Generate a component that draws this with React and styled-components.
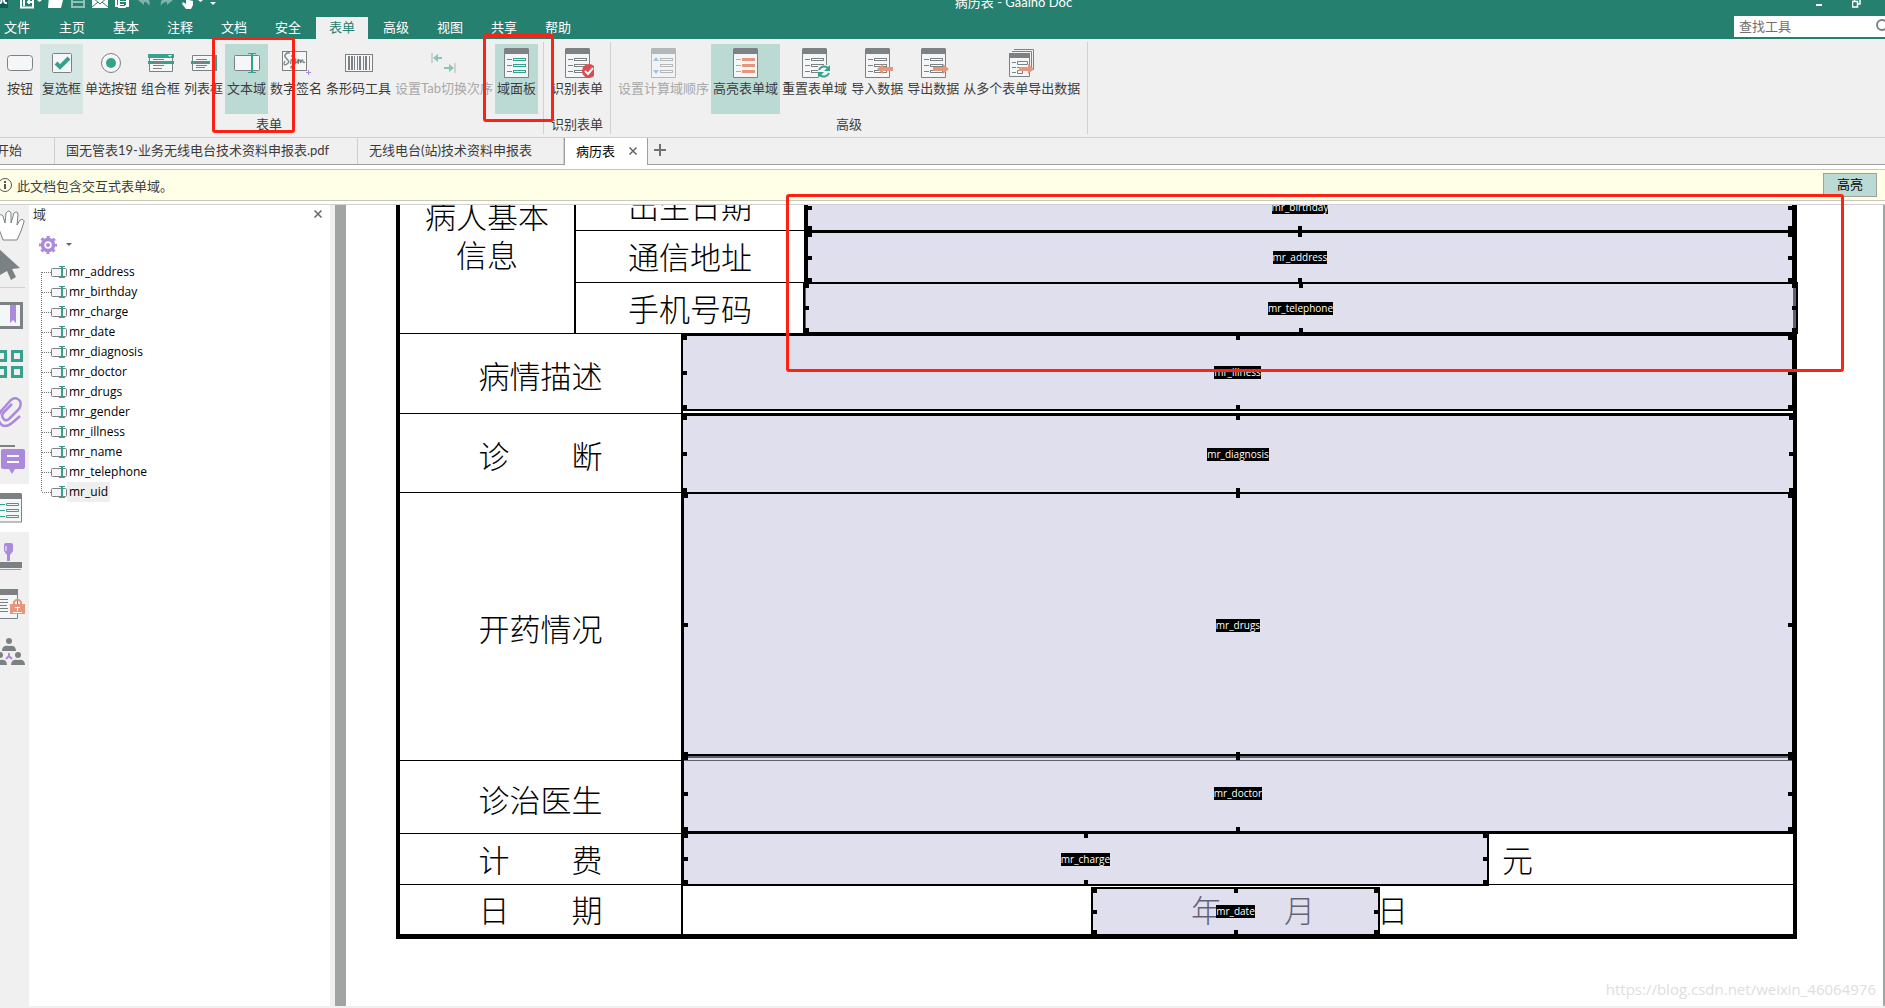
import styled, { createGlobalStyle } from "styled-components";

const GREEN = "#26806f";
const TEAL = "#36a18e";
const GREY = "#7c8283";
const ORANGE = "#e6967c";
const PURPLE = "#ab8adb";

const GlobalStyle = createGlobalStyle`
  * {
    box-sizing: border-box;
  }

  body {
    margin: 0;
    overflow: hidden;
    font-family: Lato, "Noto Sans CJK SC", sans-serif;
    font-size: 13px;
    color: #3c3c3c;
  }

  button, input {
    font: inherit;
    color: inherit;
    margin: 0;
    padding: 0;
    border: 0;
    background: none;
  }

  svg {
    display: block;
    flex: none;
  }
`;

const AppDiv = styled.div`
  position: relative;
  height: 100vh;
  display: flex;
  flex-direction: column;
  overflow: hidden;
  background: white;
  border-bottom: 2px solid #f0f0f0;
`;

/* ---------- title bar and menu ---------- */

const Header = styled.header`
  flex: none;
  height: 39px;
  display: flex;
  flex-direction: column;
  justify-content: flex-end;
  background: ${GREEN};
  color: white;
  overflow: hidden;
`;

const TitleBar = styled.div`
  flex: none;
  height: 28px;
  display: grid;
  grid-template-columns: 1fr auto 1fr;
  align-items: center;
  line-height: 20px;
  padding-left: 142px;
`;

const TitleText = styled.span`
  padding-bottom: 2px;
`;

const QuickBar = styled.div`
  margin-left: -142px;
`;

const WindowButtons = styled.div`
  display: flex;
  justify-content: flex-end;
  gap: 30px;
  padding-right: 24px;
`;

const MenuBar = styled.nav`
  flex: none;
  height: 22px;
  display: flex;
  gap: 2px;
`;

const MenuButton = styled.button`
  flex: none;
  width: ${(props) => (props.$first ? "44px" : "52px")};
  padding: 0 0 2px ${(props) => (props.$first ? "4px" : "13px")};
  text-align: left;
  line-height: 20px;
  white-space: nowrap;
  background: ${(props) => (props.$active ? "#f0f0f0" : "none")};
  color: ${(props) => (props.$active ? GREEN : "white")};
`;

const SearchLabel = styled.label`
  margin: -1px 0 2px auto;
  width: 151px;
  height: 21px;
  padding-bottom: 2px;
  display: flex;
  align-items: center;
  background: white;
  overflow: hidden;
`;

const SearchInput = styled.input`
  width: 142px;
  flex: none;
  padding-left: 5px;
  color: #666;

  &::placeholder {
    color: #707070;
    opacity: 1;
  }
`;

/* ---------- ribbon ---------- */

const Ribbon = styled.div`
  flex: none;
  height: 99px;
  padding-top: 3px;
  display: flex;
  background: #f0f0f0;
  border-bottom: 1px solid #d0d0d0;
`;

const GroupSection = styled.section`
  flex: none;
  height: 92px;
  padding: 2px 5px 0 ${(props) => (props.$first ? "0" : "5px")};
  border-right: 1px solid #d0d0d0;
`;

const ToolRow = styled.div`
  display: flex;
  height: 70px;
`;

const GroupTitle = styled.div`
  line-height: 20px;
  text-align: center;
`;

const toolColors = { on: "#bcdad4", hover: "#d6e6e3" };

const ToolButton = styled.button`
  flex: none;
  min-width: 40px;
  padding: 4px 2px 0;
  display: flex;
  flex-direction: column;
  align-items: center;
  line-height: 20px;
  white-space: nowrap;
  background: ${(props) => toolColors[props.$state] || "none"};
  color: ${(props) => (props.disabled ? "#a8a8a8" : "#3c3c3c")};
`;

/* ---------- document tabs ---------- */

const TabBar = styled.div`
  flex: none;
  height: 27px;
  display: flex;
  background: #f0f0f0;
  border-bottom: 1px solid #a0a0a0;
`;

const DocTab = styled.button`
  flex: none;
  width: ${(props) => props.$width}px;
  padding: 0 0 2px 11px;
  text-align: left;
  line-height: 24px;
  white-space: nowrap;
  border-right: 1px solid #cfcfcf;
`;

const StartTab = styled(DocTab)`
  padding-left: 0;
  text-indent: -4px;
`;

const ActiveTab = styled.div`
  flex: none;
  width: 84px;
  height: 27px;
  padding: 0 10px 2px 11px;
  display: flex;
  align-items: center;
  justify-content: space-between;
  background: white;
  color: black;
  border: solid #a0a0a0;
  border-width: 0 1px;
`;

const IconButton = styled.button`
  display: flex;
  align-items: center;
  justify-content: center;
`;

const AddTab = styled(IconButton)`
  width: 24px;
  padding-bottom: 2px;
`;

/* ---------- notice ---------- */

const Notice = styled.div`
  flex: none;
  height: 32px;
  margin: 4px 0 3px;
  padding-right: 8px;
  display: flex;
  align-items: center;
  gap: 5px;
  color: #3c3c3c;
  background: #ffffe8;
  border: solid #c8c8b4;
  border-width: 1px 0;
`;

const HighlightButton = styled.button`
  margin-left: auto;
  width: 54px;
  height: 24px;
  padding-bottom: 2px;
  line-height: 20px;
  background: #bcdad4;
  border: 1px solid #a0a0a0;
  color: black;
`;

/* ---------- work area ---------- */

const Workspace = styled.div`
  flex: 1;
  min-height: 0;
  display: flex;
  border-top: 1px solid #d0d0d0;
`;

const Rail = styled.div`
  flex: none;
  width: 29px;
  background: #f0f0f0;
  display: flex;
  flex-direction: column;
  align-items: flex-end;
  overflow: hidden;
`;

const RailButton = styled(IconButton)`
  flex: none;
  width: 40px;
  height: ${(props) => (props.$small ? "40px" : "48px")};
  justify-content: flex-start;
  background: ${(props) => (props.$active ? "white" : "none")};
`;

const RailLine = styled.hr`
  align-self: flex-start;
  width: 25px;
  margin: 2px 0 4px;
  border: 0;
  border-top: 1px solid #d0d0d0;
`;

const FieldPanel = styled.aside`
  flex: none;
  width: 306px;
  border-right: 5px solid #f0f0f0;
  background: white;
`;

const PanelHead = styled.div`
  height: 17px;
  padding: 0 8px 0 4px;
  display: flex;
  align-items: center;
  justify-content: space-between;
`;

const PanelMenu = styled.button`
  margin: 14px 0 0 10px;
  height: 18px;
  display: flex;
  align-items: center;
  gap: 9px;
`;

const TreeUl = styled.ul`
  list-style: none;
  margin: 8px 0 0 12px;
  padding: 0;
  font-family: "Open Sans", "Noto Sans CJK SC", sans-serif;
  font-size: 12px;
`;

const TreeLi = styled.li`
  height: 20px;
  display: flex;
  align-items: center;
  color: black;
`;

const TreeName = styled.button`
  height: 20px;
  padding: 0 2px;
  line-height: 20px;
  background: ${(props) => (props.$selected ? "#efefef" : "none")};
`;

const DocPane = styled.main`
  flex: 1;
  min-width: 0;
  padding: 0 86px 0 50px;
  overflow: hidden;
  background: white;
  border: solid #a0a4a2;
  border-width: 0 2px 0 11px;
`;

/* the page is scrolled down, its first rows are above the pane */
const FormTable = styled.table`
  width: 100%;
  margin-top: -65px;
  table-layout: fixed;
  border-collapse: separate;
  border-spacing: 0;
  border: solid black;
  border-width: 0 4px 5px;
  color: black;
  font-family: "Liberation Serif", "Noto Sans CJK SC", serif;
  font-size: 31px;
  font-weight: 300;
  line-height: 39px;
`;

const FormRow = styled.tr`
  height: ${(props) => props.$height}px;
`;

const LabelTh = styled.th`
  padding: ${(props) => props.$drop || 0}px 0 0;
  font-weight: 300;
  white-space: pre-line;
  border-top: 1px solid black;
  border-left: ${(props) => (props.$line ? "2px solid black" : "0")};
`;

const ValueTd = styled.td`
  position: relative;
  padding: 4px ${(props) => props.$after || 0}px 0 0;
  text-align: right;
  border-top: 1px solid black;
  border-left: 2px solid black;
`;

/* form fields lie over the page, each with its own rectangle */
const FieldBox = styled.div`
  position: absolute;
  inset: ${(props) => props.$inset};
  display: grid;
  border: 2px solid black;
  background: rgba(193, 191, 221, 0.5);
`;

const DateBox = styled(FieldBox)`
  width: 289px;
`;

const FieldInput = styled.input`
  grid-area: 1 / 1;
  width: 100%;
  height: 100%;
`;

const FieldName = styled.label`
  grid-area: 1 / 1;
  place-self: center;
  height: 13px;
  line-height: 13px;
  font-family: "Open Sans", sans-serif;
  font-size: 10px;
  font-weight: 400;
  background: black;
  color: white;
`;

const Handle = styled.span`
  position: absolute;
  width: ${(props) => (props.$x === "center" ? 4 : 6)}px;
  height: ${(props) => (props.$y === "center" ? 4 : 6)}px;
  left: ${(props) => ({ start: "-2px", center: "calc(50% - 2px)" })[props.$x] || "auto"};
  right: ${(props) => (props.$x === "end" ? "-2px" : "auto")};
  top: ${(props) => ({ start: "-2px", center: "calc(50% - 2px)" })[props.$y] || "auto"};
  bottom: ${(props) => (props.$y === "end" ? "-2px" : "auto")};
  background: black;
`;

const RedMark = styled.div`
  position: absolute;
  inset: ${(props) => props.$inset};
  width: ${(props) => props.$width || "auto"};
  height: ${(props) => props.$height};
  border: 3px solid #ff2113;
  border-radius: 3px;
  pointer-events: none;
`;

const Watermark = styled.div`
  position: absolute;
  right: 9px;
  bottom: 7px;
  font-family: "Open Sans", sans-serif;
  font-size: 15px;
  line-height: 20px;
  color: #dedede;
`;

/* ---------- icons ---------- */

function FormIcon({ kind }) {
  const dim = kind === "order";
  const line = kind === "panel" ? TEAL : GREY;
  const rows = [11, 17, 23];
  return (
    <svg width="33" height="30" viewBox="-4 0 33 30" opacity={dim ? 0.5 : 1}>
      <path d="M.5 3V29.5H24.5V3" fill="#f4f6f8" stroke={GREY} />
      <path d="M0 1L1 0H24L25 1V6H0Z" fill={GREY} />
      {rows.map((y) => (
        <g key={y} fill="none" stroke={line}>
          {kind === "highlight" ? (
            <>
              <path d={`M3 ${y + 0.5}H8`} stroke={ORANGE} />
              <path d={`M9 ${y + 0.5}H22`} stroke={ORANGE} strokeWidth="3" />
            </>
          ) : (
            <>
              {!dim && <path d={`M3 ${y + 0.5}H8`} />}
              <rect x="9.5" y={y - 0.5} width="12" height="2" fill="white" />
            </>
          )}
        </g>
      ))}
      {dim && <path d="M2 13L5 9L8 13ZM2 22L5 26L8 22Z" fill="#3f9fe0" />}
      {kind === "check" && (
        <>
          <circle cx="24" cy="23" r="7" fill="#dd4b50" />
          <path d="M20 23L23 26L28 20" fill="none" stroke="white" strokeWidth="2" />
        </>
      )}
      {kind === "reset" && (
        <>
          <path d="M16 17H29V30H16Z" fill="#f0f2f3" />
          <path d="M17 22A5.500 5.500 0 0 1 26 20M27 25A5.500 5.500 0 0 1 18 27" fill="none" stroke={TEAL} strokeWidth="2" />
          <path d="M28 17V23H22ZM16 30V24H22Z" fill={TEAL} />
        </>
      )}
      {kind === "import" && <path d="M12 21L18 16V19H28V23H18V26Z" fill={ORANGE} />}
      {kind === "export" && <path d="M28 21L22 16V19H12V23H22V26Z" fill={ORANGE} />}
    </svg>
  );
}

function MultiExportIcon() {
  return (
    <svg width="26" height="30" fill="none" stroke={GREY}>
      <path d="M5 1.500H24.500V22M3 3.500H22.500V20" />
      <path d="M.500 6V28.500H20.500V6" fill="#f4f6f8" />
      <path d="M0 5H21V10H0Z" fill={GREY} stroke="none" />
      <path d="M3 14.500H7M3 19.500H7M3 24.500H7M8.500 13.500H18.500V16.500H8.500ZM8 19.500H14M8.500 22.500H13.500V25.500H8.500Z" />
      <path d="M25 21L19 16V19H10V23H19V26Z" fill={ORANGE} stroke="none" />
    </svg>
  );
}

function TextFieldIcon() {
  return (
    <svg width="26" height="30" fill="none">
      <rect x=".5" y="7.500" width="25" height="15" rx="1" fill="#f4f6f8" stroke={GREY} />
      <path d="M18 6V24" stroke={TEAL} strokeWidth="2" />
      <path d="M14 5.500H22M14 24.500H22" stroke={TEAL} />
    </svg>
  );
}

function TreeFieldIcon() {
  return (
    <svg width="16" height="20" fill="none">
      <rect x=".5" y="6.500" width="15" height="8" rx="1" fill="#f4f6f8" stroke={GREY} />
      <path d="M11 5V16" stroke={TEAL} strokeWidth="2" />
      <path d="M8 4.500H14M8 15.500H14" stroke={TEAL} />
    </svg>
  );
}

const toolIcons = {
  button: (
    <svg width="26" height="30">
      <rect x=".5" y="7.500" width="25" height="15" rx="3" fill="#f4f6f8" stroke={GREY} />
    </svg>
  ),
  checkbox: (
    <svg width="20" height="30" fill="none">
      <rect x=".5" y="5.500" width="19" height="19" rx="1" fill="#f4f6f8" stroke={GREY} />
      <path d="M4 15L8 19L17 10" stroke={TEAL} strokeWidth="4" />
    </svg>
  ),
  radio: (
    <svg width="20" height="30">
      <circle cx="10" cy="15" r="9.500" fill="#f4f6f8" stroke={GREY} />
      <circle cx="10" cy="15" r="5" fill={TEAL} />
    </svg>
  ),
  combo: (
    <svg width="26" height="30" fill="none">
      <path d="M1.500 10V23.500H24.500V10" fill="#f4f6f8" stroke={GREY} />
      <path d="M0 6H26V10H0ZM0 13H26V16H0Z" fill={TEAL} />
      <path d="M20 7H24L22 9Z" fill="white" />
      <path d="M5 11.500H16M5 14.500H14M5 17.500H16M5 20.500H14" stroke={GREY} />
    </svg>
  ),
  list: (
    <svg width="26" height="30" fill="none">
      <path d="M1.500 7.500H24.500V22.500H1.500Z" fill="#f4f6f8" stroke={GREY} />
      <path d="M0 13H19V16H0ZM23 7H26V23H23Z" fill={TEAL} />
      <path d="M5 11.500H16M5 14.500H14M5 17.500H16M5 19.500H14" stroke={GREY} />
    </svg>
  ),
  text: <TextFieldIcon />,
  sign: (
    <svg width="30" height="30" fill="none">
      <rect x="1.500" y="3.500" width="24" height="19" fill="#f4f6f8" stroke={GREY} />
      <path
        d="M9 5C6 4 2 7 5 10S9 14 6 16S2 16 4 13M10.500 11L9.500 16M11 7V9M15 11C11 11 11 16 13.500 15L15 11L13 18C12 21 8 20 11 18L16 14L17.500 11L17 16C18 11 20 11 19.500 15L21 12C22.500 11 21 16 24 14"
        stroke={GREY}
        strokeWidth="1.300"
      />
      <path d="M27.500 22V27M25 24.500H30" stroke={PURPLE} />
    </svg>
  ),
  barcode: (
    <svg width="28" height="30" fill="none" stroke={GREY}>
      <rect x=".5" y="6.500" width="27" height="17" fill="#f4f6f8" />
      <path d="M4 8V22M7 8V22M15 8V22M21 8V22" strokeWidth="2" />
      <path d="M9.500 8V22M12.500 8V22M18.500 8V22M24.500 8V22" />
    </svg>
  ),
  tabOrder: (
    <svg width="26" height="30" opacity=".55">
      <path d="M1 5V15M24 15V25" stroke={GREY} />
      <path d="M2 10L7 6V9H11V11H7V14ZM23 20L18 16V19H13V21H18V24Z" fill={TEAL} />
    </svg>
  ),
  panel: <FormIcon kind="panel" />,
  detect: <FormIcon kind="check" />,
  order: <FormIcon kind="order" />,
  highlight: <FormIcon kind="highlight" />,
  reset: <FormIcon kind="reset" />,
  import: <FormIcon kind="import" />,
  export: <FormIcon kind="export" />,
  multi: <MultiExportIcon />,
};

function QuickIcons() {
  return (
    <svg width="220" height="28" viewBox="0 -11 220 28" fill="none">
      <path d="M0 -8H8V8H0Z" fill="#0d5c55" />
      <path d="M7 -3C3 -3 3 4 7 3M0 -2C2 -2 2 3 0 3" stroke="white" strokeWidth="2" />
      <path d="M21 -6V7.500H33V-6" stroke="white" strokeWidth="2" />
      <path d="M24 0V6M27 2H32M29 -1V4" stroke="white" strokeWidth="2" />
      <path d="M37 0H42L39.500 2ZM198 0H203L200.500 2ZM210 2H216L213 5Z" fill="white" />
      <path d="M48 8L49 -4H64L61 8Z" fill="white" />
      <path d="M72 -6V7H84V-6M72 2H84" stroke="#93bfb7" strokeWidth="2" />
      <path d="M92 -4H108V8H92Z" fill="white" />
      <path d="M92 7L98 2M108 7L102 2M92 -3L100 4L108 -3" stroke={GREEN} />
      <path d="M116 0V6H118M128 0V6H126M119 -4V7H125L127 5V-4" stroke="white" strokeWidth="2" />
      <path d="M119 1.500H126M119 4.500H124" stroke="white" />
      <path d="M138 0L144 -5V-2C149 -2 151 2 149 6C148 3 147 2 144 2V5Z" fill="#7fb3aa" />
      <path d="M173 0L167 -5V-2C162 -2 160 2 161 6C162 3 164 2 167 2V5Z" fill="#7fb3aa" />
      <path d="M186 -6H189V0L193 1V5L191 9H186L182 4L183 2L186 4Z" fill="white" />
    </svg>
  );
}

function CloseIcon() {
  return (
    <svg width="8" height="8">
      <path d="M.500 .500L7.500 7.500M7.500 .500L.500 7.500" stroke="#666" strokeWidth="1.500" />
    </svg>
  );
}

// rail drawings start 11px left of the window edge
const railIcons = {
  hand: (
    <svg width="36" height="32" viewBox="-11 0 36 32">
      <path d="M3 31L-1 20L-8 14Q-6 10 -1 14L-1 8Q0 4 3 7L5 14L6 4Q9 0 11 4V14L14 4Q18 1 18 6L17 16L20 11Q24 9 24 13L21 22L17 31Z" fill="white" stroke={GREY} />
    </svg>
  ),
  select: (
    <svg width="36" height="32" viewBox="-11 0 36 32">
      <path d="M-2 -1L20 19L12 20L16 28L11 31L7 22L-2 27Z" fill={GREY} />
    </svg>
  ),
  bookmark: (
    <svg width="36" height="30" viewBox="-11 0 36 30">
      <path d="M-6 2.500H21.500V26.500H-6Z" fill="#f4f6f8" stroke={GREY} strokeWidth="3" />
      <path d="M10 4H16V22L13 19L10 22Z" fill={PURPLE} />
    </svg>
  ),
  pages: (
    <svg width="36" height="30" viewBox="-11 0 36 30" fill="none" stroke={TEAL} strokeWidth="3">
      <path d="M-3.500 2.500H5.500V11.500H-3.500ZM12.500 2.500H21.500V11.500H12.500ZM-3.500 18.500H5.500V27.500H-3.500ZM12.500 18.500H21.500V27.500H12.500Z" />
    </svg>
  ),
  clip: (
    <svg width="36" height="30" viewBox="-11 0 36 30" fill="none" stroke={PURPLE} strokeWidth="2.500">
      <path d="M20 19L12 26Q3 33 -1 24Q-3 18 2 13L11 3Q16 -1 20 4Q22 9 18 13L9 22Q5 25 3 21Q1 18 4 15L12 7" />
    </svg>
  ),
  comment: (
    <svg width="36" height="30" viewBox="-11 0 36 30">
      <path d="M-10 -2H15V2H-10Z" fill={GREY} />
      <path d="M3 4H23Q25 4 25 6V22Q25 24 23 24H15L12 29L9 24H3Q1 24 1 22V6Q1 4 3 4Z" fill={PURPLE} />
      <path d="M7 11H19M7 17H19" stroke="white" strokeWidth="2" />
    </svg>
  ),
  form: (
    <svg width="36" height="30" viewBox="-11 0 36 30" fill="none" stroke={TEAL}>
      <path d="M-5 4V29H21.500V4" fill="#f4f6f8" stroke={GREY} />
      <path d="M-6 0H21L22 1V6H-6Z" fill={GREY} stroke="none" />
      <path d="M0 11.500H5M0 17.500H5M0 23.500H5M6.500 10.500H18.500V12.500H6.500ZM6.500 16.500H18.500V18.500H6.500ZM6.500 22.500H18.500V24.500H6.500Z" />
    </svg>
  ),
  stamp: (
    <svg width="36" height="30" viewBox="-11 0 36 30">
      <path d="M6 2H11Q13 2 13 4V10L10 14V20H7V14L4 10V4Q4 2 6 2Z" fill={PURPLE} />
      <path d="M6 5V10" stroke="white" />
      <path d="M-6 21H22V27H-6Z" fill={GREY} />
      <path d="M-6 28.500H21" stroke={PURPLE} />
    </svg>
  ),
  secure: (
    <svg width="36" height="30" viewBox="-11 0 36 30" fill="none">
      <path d="M-6 4V29.500H17.500V4" fill="#f4f6f8" stroke={GREY} />
      <path d="M-6 0H18V6H-6Z" fill={GREY} />
      <path d="M-2 10.500H8M-2 13.500H8M-2 16.500H7M-2 19.500H8M-2 22.500H8" stroke={GREY} />
      <path d="M14 15V13Q17.500 8 21 13V15" stroke={ORANGE} strokeWidth="2" />
      <path d="M10 15H25V25H10Z" fill={ORANGE} />
      <path d="M15 18.500H20M17.500 18V22M13 23.500H22" stroke="white" />
    </svg>
  ),
  people: (
    <svg width="36" height="30" viewBox="-11 0 36 30" fill={GREY}>
      <circle cx="9" cy="4" r="3" />
      <path d="M2 14Q2 8 9 9Q16 8 16 14ZM-7 28Q-7 22 0 23Q7 22 7 28ZM11 28Q11 22 18 23Q25 22 25 28Z" />
      <circle cx="0" cy="18" r="3" />
      <circle cx="18" cy="18" r="3" />
      <path d="M9 16V19L6 22M9 19L12 22" stroke={PURPLE} strokeWidth="2" fill="none" />
    </svg>
  ),
};

/* ---------- data ---------- */

const menus = ["文件", "主页", "基本", "注释", "文档", "安全", "表单", "高级", "视图", "共享", "帮助"];

const groups = [
  {
    title: "表单",
    tools: [
      { name: "按钮", icon: "button" },
      { name: "复选框", icon: "checkbox", state: "hover" },
      { name: "单选按钮", icon: "radio" },
      { name: "组合框", icon: "combo" },
      { name: "列表框", icon: "list" },
      { name: "文本域", icon: "text", state: "on" },
      { name: "数字签名", icon: "sign" },
      { name: "条形码工具", icon: "barcode" },
      { name: "设置Tab切换次序", icon: "tabOrder", disabled: true },
      { name: "域面板", icon: "panel", state: "on" },
    ],
  },
  { title: "识别表单", tools: [{ name: "识别表单", icon: "detect" }] },
  {
    title: "高级",
    tools: [
      { name: "设置计算域顺序", icon: "order", disabled: true },
      { name: "高亮表单域", icon: "highlight", state: "on" },
      { name: "重置表单域", icon: "reset" },
      { name: "导入数据", icon: "import" },
      { name: "导出数据", icon: "export" },
      { name: "从多个表单导出数据", icon: "multi" },
    ],
  },
];

const fieldNames = [
  "mr_address",
  "mr_birthday",
  "mr_charge",
  "mr_date",
  "mr_diagnosis",
  "mr_doctor",
  "mr_drugs",
  "mr_gender",
  "mr_illness",
  "mr_name",
  "mr_telephone",
  "mr_uid",
];

const railItems = ["bookmark", "pages", "clip", "comment", "form", "stamp", "secure", "people"];

const infoRows = [
  { label: "出生日期", name: "mr_birthday", height: 51, inset: "3px -1px -2px 0" },
  { label: "通信地址", name: "mr_address", height: 52, inset: "0 -1px -2px 0" },
  { label: "手机号码", name: "mr_telephone", height: 51, inset: "-1px -5px -1px -3px" },
];

const mainRows = [
  { label: "病情描述", name: "mr_illness", height: 80, drop: 8, inset: "0 -1px 2px -2px" },
  { label: "诊　　断", name: "mr_diagnosis", height: 79, drop: 8, inset: "0 -2px -2px -2px" },
  { label: "开药情况", name: "mr_drugs", height: 268, drop: 8, inset: "-1px -1px 2px -1px" },
  { label: "诊治医生", name: "mr_doctor", height: 73, drop: 8, inset: "-7px -1px 0 -1px" },
  { label: "计　　费", name: "mr_charge", height: 51, drop: 4, inset: "-2px 304px -2px -1px", text: "元", after: 260 },
  { label: "日　　期", name: "mr_date", height: 50, drop: 4, inset: "2px 413px -2px auto", text: "年　　月　　日", after: 385 },
];

const handles = ["start", "center", "end"].flatMap((x) =>
  ["start", "center", "end"].filter((y) => x !== "center" || y !== "center").map((y) => ({ x, y }))
);

function FormField({ name, inset }) {
  const Box = name === "mr_date" ? DateBox : FieldBox;
  return (
    <Box $inset={inset}>
      <FieldInput id={name} />
      <FieldName htmlFor={name}>{name}</FieldName>
      {handles.map(({ x, y }) => (
        <Handle key={x + y} $x={x} $y={y} />
      ))}
    </Box>
  );
}

export default function App() {
  return (
    <AppDiv>
      <GlobalStyle />
      <Header>
        <TitleBar>
          <QuickBar>
            <QuickIcons />
          </QuickBar>
          <TitleText>病历表 - Gaaiho Doc</TitleText>
          <WindowButtons>
            <IconButton aria-label="最小化">
              <svg width="6" height="10">
                <path d="M0 6H6V8H0Z" fill="white" />
              </svg>
            </IconButton>
            <IconButton aria-label="还原">
              <svg width="9" height="10" fill="none" stroke="white">
                <path d="M.500 3.500H5.500V9H.500ZM2.500 3V1H8V6H6" strokeWidth="1.500" />
              </svg>
            </IconButton>
          </WindowButtons>
        </TitleBar>
        <MenuBar>
          {menus.map((menu, i) => (
            <MenuButton key={menu} $first={i === 0} $active={menu === "表单"}>
              {menu}
            </MenuButton>
          ))}
          <SearchLabel>
            <SearchInput placeholder="查找工具" aria-label="查找工具" />
            <svg width="16" height="16" fill="none" stroke={GREY} strokeWidth="2">
              <circle cx="6" cy="7" r="5" />
              <path d="M10 11L15 16" />
            </svg>
          </SearchLabel>
        </MenuBar>
      </Header>

      <Ribbon>
        {groups.map((group, i) => (
          <GroupSection key={group.title} $first={i === 0}>
            <ToolRow>
              {group.tools.map((tool) => (
                <ToolButton key={tool.name} $state={tool.state} disabled={tool.disabled}>
                  {toolIcons[tool.icon]}
                  {tool.name}
                </ToolButton>
              ))}
            </ToolRow>
            <GroupTitle>{group.title}</GroupTitle>
          </GroupSection>
        ))}
      </Ribbon>

      <TabBar>
        <StartTab $width={55}>开始</StartTab>
        <DocTab $width={303}>国无管表19-业务无线电台技术资料申报表.pdf</DocTab>
        <DocTab $width={206}>无线电台(站)技术资料申报表</DocTab>
        <ActiveTab>
          病历表
          <IconButton aria-label="关闭">
            <CloseIcon />
          </IconButton>
        </ActiveTab>
        <AddTab aria-label="新建">
          <svg width="12" height="12">
            <path d="M6 0V12M0 6H12" stroke="#707070" strokeWidth="2" />
          </svg>
        </AddTab>
      </TabBar>

      <Notice>
        <svg width="12" height="14" fill="none" stroke="#555">
          <circle cx="5" cy="7" r="6.500" />
          <path d="M5 6V11M5 3V5" strokeWidth="2" />
        </svg>
        此文档包含交互式表单域。
        <HighlightButton>高亮</HighlightButton>
      </Notice>

      <Workspace>
        <Rail>
          <RailButton $small aria-label="手形工具">{railIcons.hand}</RailButton>
          <RailButton $small aria-label="选择">{railIcons.select}</RailButton>
          <RailLine />
          {railItems.map((item) => (
            <RailButton key={item} $active={item === "form"} aria-label={item}>
              {railIcons[item]}
            </RailButton>
          ))}
        </Rail>

        <FieldPanel>
          <PanelHead>
            域
            <IconButton aria-label="关闭面板">
              <CloseIcon />
            </IconButton>
          </PanelHead>
          <PanelMenu aria-label="选项">
            <svg width="18" height="18" fill="none" stroke={PURPLE}>
              <circle cx="9" cy="9" r="5.500" strokeWidth="3.500" />
              <circle cx="9" cy="9" r="8" strokeWidth="2.500" strokeDasharray="3 3.280" strokeDashoffset="1.500" />
              <circle cx="9" cy="9" r="2" fill={PURPLE} stroke="none" />
            </svg>
            <svg width="6" height="4">
              <path d="M0 0H6L3 3Z" fill="#666" />
            </svg>
          </PanelMenu>
          <TreeUl>
            {fieldNames.map((name, i) => (
              <TreeLi key={name}>
                <svg width="10" height="20" stroke="#777" strokeDasharray="1 1">
                  <path
                    d={`M.5 ${i === 0 ? 10 : 0}V${i === fieldNames.length - 1 ? 10 : 20}M1 10.500H10`}
                  />
                </svg>
                <TreeFieldIcon />
                <TreeName $selected={name === "mr_uid"}>{name}</TreeName>
              </TreeLi>
            ))}
          </TreeUl>
        </FieldPanel>

        <DocPane>
          <FormTable>
            <colgroup>
              <col width="174" />
              <col width="107" />
              <col width="123" />
              <col />
            </colgroup>
            <tbody>
              <FormRow $height={39}>
                <LabelTh rowSpan={4}>{"病人基本\n信息"}</LabelTh>
                <LabelTh colSpan={2} $line />
                <ValueTd />
              </FormRow>
              {infoRows.map((row) => (
                <FormRow key={row.name} $height={row.height}>
                  <LabelTh colSpan={2} $drop={4} $line>
                    {row.label}
                  </LabelTh>
                  <ValueTd>
                    <FormField name={row.name} inset={row.inset} />
                  </ValueTd>
                </FormRow>
              ))}
              {mainRows.map((row) => (
                <FormRow key={row.name} $height={row.height}>
                  <LabelTh colSpan={2} $drop={row.drop}>
                    {row.label}
                  </LabelTh>
                  <ValueTd colSpan={2} $after={row.after}>
                    {row.text}
                    <FormField name={row.name} inset={row.inset} />
                  </ValueTd>
                </FormRow>
              ))}
            </tbody>
          </FormTable>
        </DocPane>
      </Workspace>

      <Watermark>https://blog.csdn.net/weixin_46064976</Watermark>
      <RedMark $inset="37px auto auto 212px" $width="83px" $height="96px" />
      <RedMark $inset="34px auto auto 483px" $width="71px" $height="88px" />
      <RedMark $inset="194px 41px auto 786px" $height="178px" />
    </AppDiv>
  );
}
